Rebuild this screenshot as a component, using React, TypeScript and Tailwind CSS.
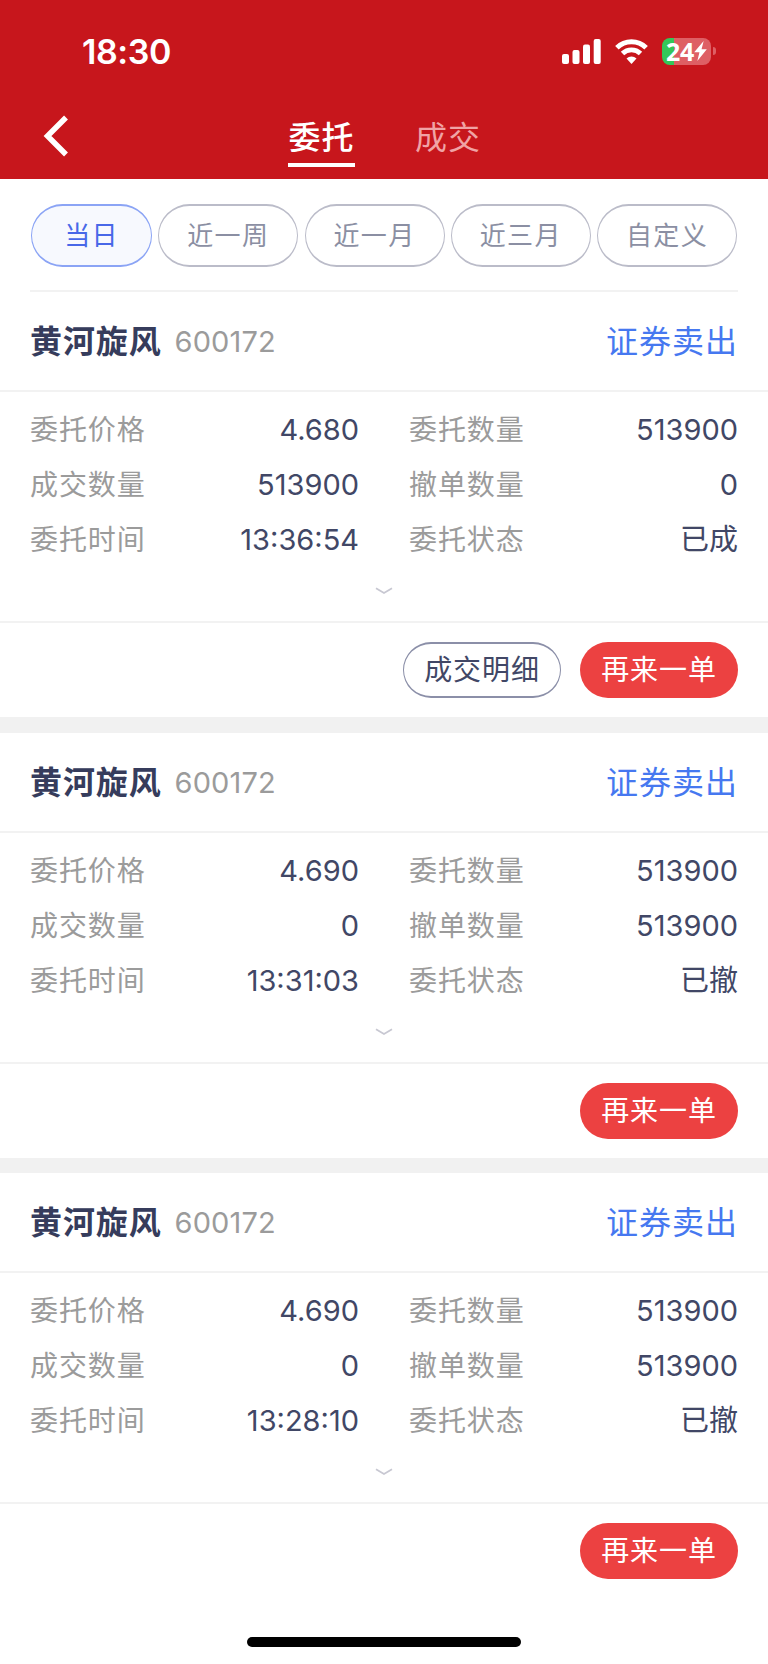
import { useState } from 'react';

interface Pedido {
  id: string;
  nome: string;
  codigo: string;
  preco: string;
  quantidade: string;
  negociada: string;
  cancelada: string;
  hora: string;
  status: string;
  temDetalhe: boolean;
}

const pedidos: Pedido[] = [
  {
    id: '1',
    nome: '黄河旋风',
    codigo: '600172',
    preco: '4.680',
    quantidade: '513900',
    negociada: '513900',
    cancelada: '0',
    hora: '13:36:54',
    status: '已成',
    temDetalhe: true,
  },
  {
    id: '2',
    nome: '黄河旋风',
    codigo: '600172',
    preco: '4.690',
    quantidade: '513900',
    negociada: '0',
    cancelada: '513900',
    hora: '13:31:03',
    status: '已撤',
    temDetalhe: false,
  },
  {
    id: '3',
    nome: '黄河旋风',
    codigo: '600172',
    preco: '4.690',
    quantidade: '513900',
    negociada: '0',
    cancelada: '513900',
    hora: '13:28:10',
    status: '已撤',
    temDetalhe: false,
  },
];

const periodos = ['当日', '近一周', '近一月', '近三月', '自定义'];

function StatusBar() {
  return (
    <div className="flex h-[102px] items-center justify-between pl-[82px] pr-[52px]">
      <span className="pt-[1px] text-[34px] font-semibold leading-none tracking-[-0.4px]">18:30</span>
      <div className="flex items-center">
        <svg width="39" height="25" viewBox="0 0 39 25" fill="currentColor">
          <rect x="0" y="15" width="7" height="10" rx="2" />
          <rect x="10.5" y="11" width="7" height="14" rx="2" />
          <rect x="21" y="5.5" width="7" height="19.5" rx="2" />
          <rect x="31.7" y="0" width="7" height="25" rx="2" />
        </svg>
        <svg className="ml-[14px]" width="33" height="25" viewBox="0 0 33 25" fill="none" stroke="currentColor">
          <path d="M1.9 8.7a20.8 20.8 0 0 1 29.2 0" strokeWidth="5" />
          <path d="M7.5 14.5a12.8 12.8 0 0 1 18 0" strokeWidth="4.8" />
          <path d="M16.5 25l-5-5.4a7.3 7.3 0 0 1 10 0z" fill="currentColor" stroke="none" />
        </svg>
        <div className="ml-[14px] flex h-[27px] w-[49px] items-center justify-center rounded-[8px] bg-[linear-gradient(90deg,#34c759_12px,#de5f64_12px)]">
          <span className="font-['Noto_Sans'] text-[25px] font-bold leading-none tracking-[-0.4px]">24</span>
          <svg width="13" height="20" viewBox="0 0 12 19" fill="currentColor">
            <path d="M9 0L0 10.8h5L3 19l9-11.2H7z" />
          </svg>
        </div>
        <div className="ml-[2px] h-[8px] w-[3px] rounded-r-full bg-[#de5f64]" />
      </div>
    </div>
  );
}

function Campo({ label, valor }: { label: string; valor: string }) {
  return (
    <div className="flex h-[55px] items-center justify-between pt-[1px]">
      <span className="text-[28px] tracking-[0.9px] text-[#9b9b9b]">{label}</span>
      <span className="text-[29px] text-[#414766]">{valor}</span>
    </div>
  );
}

function PedidoCard({ pedido }: { pedido: Pedido }) {
  return (
    <div>
      <div className="flex h-[100px] items-center justify-between border-b-2 border-[#f2f2f2] px-[30px] pt-[2px]">
        <div className="flex items-center">
          <span className="text-[32px] font-bold tracking-[0.9px] text-[#363c5c]">{pedido.nome}</span>
          <span className="ml-[13px] text-[29px] tracking-[0.1px] text-[#9b9b9b]">{pedido.codigo}</span>
        </div>
        <span className="text-[32px] tracking-[1px] text-[#4678f0]">证券卖出</span>
      </div>

      <div className="h-[231px] border-b-2 border-[#f2f2f2] pt-[10px]">
        <div className="grid grid-cols-[329px_329px] justify-between px-[30px]">
          <Campo label="委托价格" valor={pedido.preco} />
          <Campo label="委托数量" valor={pedido.quantidade} />
          <Campo label="成交数量" valor={pedido.negociada} />
          <Campo label="撤单数量" valor={pedido.cancelada} />
          <Campo label="委托时间" valor={pedido.hora} />
          <Campo label="委托状态" valor={pedido.status} />
        </div>
        <svg
          className="mx-auto mt-[20px]"
          width="18"
          height="8"
          viewBox="0 0 18 8"
          fill="none"
          stroke="#c8c8d2"
          strokeWidth="1.8"
        >
          <path d="M1 1.2l8 4.8 8-4.8" />
        </svg>
      </div>

      <div className="flex h-[94px] items-center justify-end gap-[19px] px-[30px]">
        {pedido.temDetalhe && (
          <button className="h-[56px] w-[158px] rounded-full border-x border-y-2 border-[#8b8fa8] text-[28px] leading-none tracking-[0.9px] text-[#414766]">
            成交明细
          </button>
        )}
        <button className="h-[56px] w-[158px] rounded-full bg-[#ec4141] text-[28px] leading-none tracking-[0.9px] text-white">
          再来一单
        </button>
      </div>
    </div>
  );
}

export default function App() {
  const [periodo, setPeriodo] = useState('当日');

  return (
    <div className="flex h-[1664px] w-[768px] flex-col overflow-hidden bg-white font-['Inter','Noto_Sans_CJK_SC',sans-serif]">
      <header className="h-[179px] shrink-0 bg-[#c7161c] text-white">
        <StatusBar />
        <div className="grid h-[77px] grid-cols-[288px_67px_60px_68px] items-start">
          <svg className="ml-[43px] mt-[13px]" width="26" height="42" viewBox="0 0 26 42" fill="none" stroke="currentColor" strokeWidth="5.5">
            <path d="M23 2.5L4.5 21 23 39.5" />
          </svg>
          <div className="flex h-[65px] flex-col items-center justify-between">
            <span className="mt-[12px] text-[32px] font-medium leading-[48px] tracking-[1px]">委托</span>
            <div className="h-[4px] w-[67px] shrink-0 bg-white" />
          </div>
          <span />
          <span className="mt-[12px] whitespace-nowrap text-[32px] leading-[48px] tracking-[1px] text-[#f0a3a5]">成交</span>
        </div>
      </header>

      <div className="mx-[30px] flex h-[113px] shrink-0 items-center justify-between border-b-2 border-[#f2f2f2] px-[1px] pt-[1px]">
        {periodos.map((p) => (
          <button
            key={p}
            onClick={() => setPeriodo(p)}
            className={
              p === periodo
                ? 'h-[63px] w-[121px] rounded-full border-x border-y-2 border-[#8ba4f5] bg-[#f7f9fe] pt-[1px] text-[26px] tracking-[1.3px] text-[#4868e8]'
                : 'h-[63px] w-[140px] rounded-full border-x border-y-2 border-[#bbbcc9] pt-[1px] text-[26px] tracking-[1.3px] text-[#8b8fa3]'
            }
          >
            {p}
          </button>
        ))}
      </div>

      {/* o espaço entre os cartões mostra o fundo cinza */}
      <div className="flex shrink-0 flex-col gap-[15.5px] bg-[#f1f1f1] *:bg-white">
        {pedidos.map((pedido) => (
          <PedidoCard key={pedido.id} pedido={pedido} />
        ))}
      </div>

      {/* Indicador de início */}
      <div className="mx-auto mt-[39px] h-[10px] w-[274px] shrink-0 rounded-full bg-black" />
    </div>
  );
}
